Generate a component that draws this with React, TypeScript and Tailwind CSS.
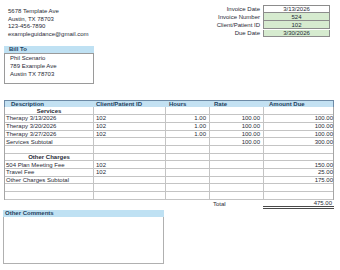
import React from 'react';

const font = { fontFamily: '"Liberation Sans", Arial, sans-serif' };

const rows: { d: string; id: string; h: string; r: string; a: string; kind?: 'section' | 'blank' }[] = [
  { d: 'Services', id: '', h: '', r: '', a: '', kind: 'section' },
  { d: 'Therapy 3/13/2026', id: '102', h: '1.00', r: '100.00', a: '100.00' },
  { d: 'Therapy 3/20/2026', id: '102', h: '1.00', r: '100.00', a: '100.00' },
  { d: 'Therapy 3/27/2026', id: '102', h: '1.00', r: '100.00', a: '100.00' },
  { d: 'Services Subtotal', id: '', h: '', r: '100.00', a: '300.00' },
  { d: '', id: '', h: '', r: '', a: '', kind: 'blank' },
  { d: 'Other Charges', id: '', h: '', r: '', a: '', kind: 'section' },
  { d: '504 Plan Meeting Fee', id: '102', h: '', r: '', a: '150.00' },
  { d: 'Travel Fee', id: '102', h: '', r: '', a: '25.00' },
  { d: 'Other Charges Subtotal', id: '', h: '', r: '', a: '175.00' },
  { d: '', id: '', h: '', r: '', a: '', kind: 'blank' },
  { d: '', id: '', h: '', r: '', a: '', kind: 'blank' },
];

const invoiceInfo = [
  { label: 'Invoice Date', value: '3/13/2026', green: false },
  { label: 'Invoice Number', value: '524', green: true },
  { label: 'Client/Patient ID', value: '102', green: true },
  { label: 'Due Date', value: '3/30/2026', green: true },
];

const cols = 'grid grid-cols-[89px_72px_44px_54px_71px]';

export default function App() {
  return (
    <div className="w-[340px] h-[270px] bg-white text-[6px] leading-none text-[#1f2a36] overflow-hidden" style={font}>
      {/* header */}
      <div className="flex justify-between pt-[5px]">
        <div className="pl-[8px] pt-[2px]">
          <div className="h-[7.7px] flex items-center">5678 Template Ave</div>
          <div className="h-[7.7px] flex items-center">Austin, TX 78703</div>
          <div className="h-[7.7px] flex items-center">123-456-7890</div>
          <div className="h-[7.7px] flex items-center">exampleguidance@gmail.com</div>
        </div>
        <div className="grid grid-cols-[auto_67px] mr-[10px]">
          {invoiceInfo.map((it, i) => (
            <React.Fragment key={it.label}>
              <div className="h-[7.7px] flex items-center justify-end pr-[3px]">{it.label}</div>
              <div
                className={`h-[7.7px] flex items-center justify-center border-x border-b border-[#8c8c8c] ${
                  i === 0 ? 'border-t' : ''
                } ${it.green ? 'bg-[#d6ebcf]' : 'bg-white'}`}
              >
                {it.value}
              </div>
            </React.Fragment>
          ))}
        </div>
      </div>

      {/* bill to */}
      <div className="ml-[4px] mt-[8px] w-[90px]">
        <div className="h-[7px] bg-[#bfe1f3] flex items-center pl-[5px] font-bold text-[#1d3f5e]">Bill To</div>
        <div className="h-[31px] border border-[#9a9a9a] pl-[5px]">
          <div className="h-[8px] flex items-center">Phil Scenario</div>
          <div className="h-[8px] flex items-center">789 Example Ave</div>
          <div className="h-[8px] flex items-center">Austin TX 78703</div>
        </div>
      </div>

      {/* table */}
      <div className="ml-[4px] mt-[16px] w-[330px]">
        <div className={`${cols} h-[7.7px] bg-[#c3e1f2] border-t border-x border-[#6c8aa6] font-bold text-[#1d3f5e]`}>
          <div className="flex items-center pl-[6px]">Description</div>
          <div className="flex items-center pl-[2px]">Client/Patient ID</div>
          <div className="flex items-center pl-[3px]">Hours</div>
          <div className="flex items-center pl-[4px]">Rate</div>
          <div className="flex items-center pl-[5px]">Amount Due</div>
        </div>
        <div className="border-x border-[#a6a6a6]">
          {rows.map((r, i) => (
            <div key={i} className={`${cols} h-[7.7px] border-b border-[#c4c4c4]`}>
              <div
                className={`flex items-center border-r border-[#c4c4c4] ${
                  r.kind === 'section' ? 'justify-center font-bold' : 'pl-[1px]'
                }`}
              >
                {r.d}
              </div>
              <div className="flex items-center pl-[2px] border-r border-[#c4c4c4]">{r.id}</div>
              <div className="flex items-center justify-end pr-[3px] border-r border-[#c4c4c4]">{r.h}</div>
              <div className="flex items-center justify-end pr-[3px] border-r border-[#c4c4c4]">{r.r}</div>
              <div className="flex items-center justify-end pr-[2px]">{r.a}</div>
            </div>
          ))}
        </div>
        <div className={`${cols} h-[8px]`}>
          <div />
          <div />
          <div />
          <div className="flex items-center pl-[4px]">Total</div>
          <div className="flex items-center justify-end pr-[2px] border-b-[3px] border-double border-[#4a4a4a]">475.00</div>
        </div>
      </div>

      {/* comments */}
      <div className="ml-[3px] mt-[2px] w-[161px]">
        <div className="h-[7px] bg-[#bfe1f3] flex items-center pl-[2px] font-bold text-[#1d3f5e]">Other Comments</div>
        <div className="h-[47px] border border-t-0 border-[#b0b0b0]" />
      </div>
    </div>
  );
}
